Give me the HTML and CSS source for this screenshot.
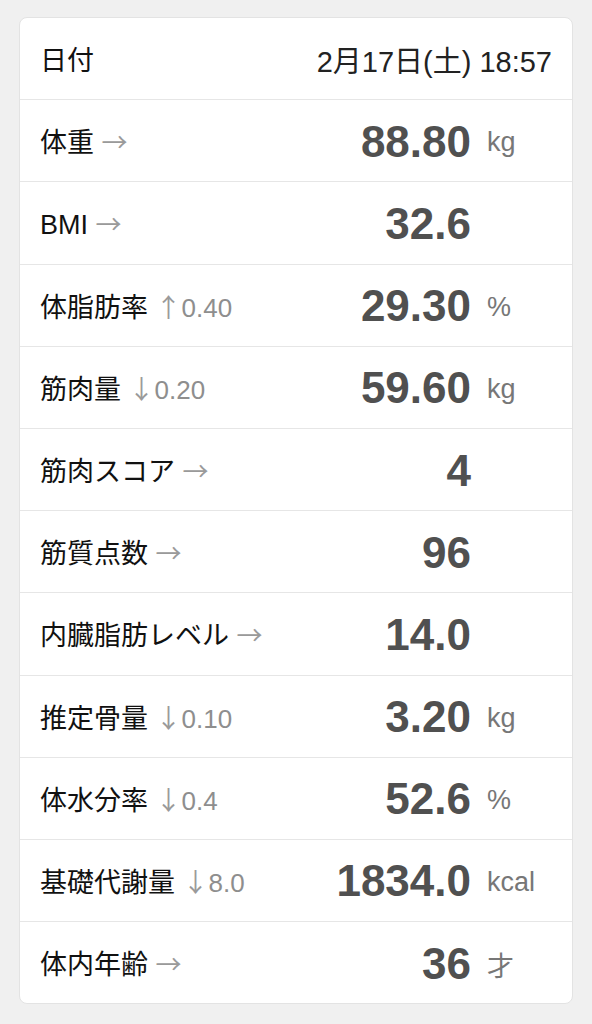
FILE: index.html
```html
<!DOCTYPE html>
<html lang="ja">
  <head>
    <meta charset="UTF-8" />
    <meta name="viewport" content="width=device-width, initial-scale=1.0" />
    <title>体組成</title>
    <link rel="stylesheet" href="styles.css">
  </head>
  <body>
    <main class="card">
      <div class="row date-row">
        <p class="label">日付</p>
        <p class="date">2月17日(土) 18:57</p>
      </div>
      <div class="row">
        <p class="label">体重 <span class="diff"><span class="arrow">→</span></span></p>
        <p class="value">88.80</p>
        <p class="unit">kg</p>
      </div>
      <div class="row">
        <p class="label">BMI <span class="diff"><span class="arrow">→</span></span></p>
        <p class="value">32.6</p>
        <p class="unit"></p>
      </div>
      <div class="row">
        <p class="label">体脂肪率 <span class="diff"><span class="arrow">↑</span>0.40</span></p>
        <p class="value">29.30</p>
        <p class="unit">%</p>
      </div>
      <div class="row">
        <p class="label">筋肉量 <span class="diff"><span class="arrow">↓</span>0.20</span></p>
        <p class="value">59.60</p>
        <p class="unit">kg</p>
      </div>
      <div class="row">
        <p class="label">筋肉スコア <span class="diff"><span class="arrow">→</span></span></p>
        <p class="value">4</p>
        <p class="unit"></p>
      </div>
      <div class="row">
        <p class="label">筋質点数 <span class="diff"><span class="arrow">→</span></span></p>
        <p class="value">96</p>
        <p class="unit"></p>
      </div>
      <div class="row">
        <p class="label">内臓脂肪レベル <span class="diff"><span class="arrow">→</span></span></p>
        <p class="value">14.0</p>
        <p class="unit"></p>
      </div>
      <div class="row">
        <p class="label">推定骨量 <span class="diff"><span class="arrow">↓</span>0.10</span></p>
        <p class="value">3.20</p>
        <p class="unit">kg</p>
      </div>
      <div class="row">
        <p class="label">体水分率 <span class="diff"><span class="arrow">↓</span>0.4</span></p>
        <p class="value">52.6</p>
        <p class="unit">%</p>
      </div>
      <div class="row">
        <p class="label">基礎代謝量 <span class="diff"><span class="arrow">↓</span>8.0</span></p>
        <p class="value">1834.0</p>
        <p class="unit">kcal</p>
      </div>
      <div class="row">
        <p class="label">体内年齢 <span class="diff"><span class="arrow">→</span></span></p>
        <p class="value">36</p>
        <p class="unit">才</p>
      </div>
    </main>
  </body>
</html>
```

FILE: styles.css
```css
body {
  margin: 0;
  padding: 17px 19px 0 19px;
  background-color: #f0f0f0;
  font-family: "Liberation Sans", "Noto Sans CJK JP", sans-serif;
  color: #111;
}
p {
  margin: 0;
}
.card {
  background-color: white;
  border: 1px solid #e3e3e3;
  border-radius: 8px;
}
.row {
  display: flex;
  align-items: center;
  height: 81.2px;
  border-bottom: 1px solid #e6e6e6;
  padding: 0 20px;
}
.row:last-child {
  border-bottom: none;
}
.label {
  flex: 1;
  font-size: 27px;
  white-space: nowrap;
}
.diff {
  color: #8e8e8e;
  font-size: 26px;
}
.arrow {
  font-family: "Noto Sans CJK JP", sans-serif;
  color: #9a9a9a;
}
.date {
  font-size: 29px;
  color: #222;
}
.value {
  font-size: 44px;
  font-weight: bold;
  color: #505050;
  text-align: right;
  padding-top: 2px;
}
.unit {
  width: 65px;
  margin-left: 16px;
  font-size: 27px;
  color: #777;
  padding-top: 4px;
}
```
